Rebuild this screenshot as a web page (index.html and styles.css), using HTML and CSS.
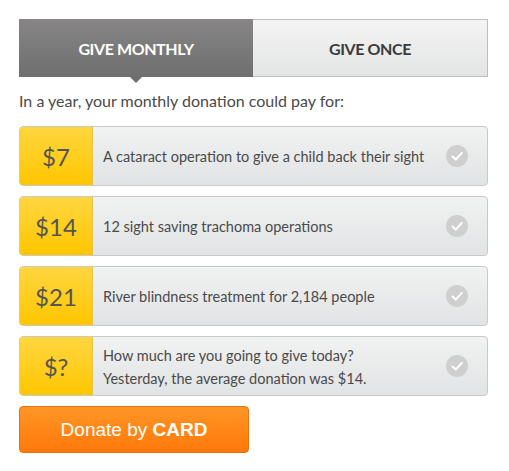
FILE: index.html
```html
<!DOCTYPE html>
<html>
<head>
<meta charset="utf-8">
<link rel="stylesheet" href="styles.css">
</head>
<body>
<div class="wrap">
  <div class="tabs">
    <div class="tab active">GIVE MONTHLY</div>
    <div class="tab">GIVE ONCE</div>
  </div>
  <p class="intro">In a year, your monthly donation could pay for:</p>
  <div class="rows">
    <div class="row">
      <div class="amt">$7</div>
      <div class="desc">A cataract operation to give a child back their sight</div>
      <div class="check"><svg width="22" height="22" viewBox="0 0 22 22"><path d="M6.5 11.5 L9.8 14.6 L15.8 7.8" fill="none" stroke="#fff" stroke-width="2" stroke-linecap="round" stroke-linejoin="round"/></svg></div>
    </div>
    <div class="row">
      <div class="amt">$14</div>
      <div class="desc">12 sight saving trachoma operations</div>
      <div class="check"><svg width="22" height="22" viewBox="0 0 22 22"><path d="M6.5 11.5 L9.8 14.6 L15.8 7.8" fill="none" stroke="#fff" stroke-width="2" stroke-linecap="round" stroke-linejoin="round"/></svg></div>
    </div>
    <div class="row">
      <div class="amt">$21</div>
      <div class="desc">River blindness treatment for 2,184 people</div>
      <div class="check"><svg width="22" height="22" viewBox="0 0 22 22"><path d="M6.5 11.5 L9.8 14.6 L15.8 7.8" fill="none" stroke="#fff" stroke-width="2" stroke-linecap="round" stroke-linejoin="round"/></svg></div>
    </div>
    <div class="row">
      <div class="amt">$?</div>
      <div class="desc two">How much are you going to give today?<br>Yesterday, the average donation was $14.</div>
      <div class="check"><svg width="22" height="22" viewBox="0 0 22 22"><path d="M6.5 11.5 L9.8 14.6 L15.8 7.8" fill="none" stroke="#fff" stroke-width="2" stroke-linecap="round" stroke-linejoin="round"/></svg></div>
    </div>
  </div>
  <button class="donate">Donate by <b>CARD</b></button>
</div>
</body>
</html>
```
FILE: styles.css
```css
html, body { margin: 0; padding: 0; background: #fff; }
body { font-family: Lato, "Open Sans", sans-serif; color: #4a4a4a; }
.wrap { width: 469px; padding: 19px 0 0 19px; }
.tabs { display: flex; height: 58px; position: relative; }
.tab {
  flex: 1; display: flex; align-items: center; justify-content: center;
  font-weight: 700; font-size: 16px; letter-spacing: -0.4px;
  box-sizing: border-box;
}
.tab.active {
  background: linear-gradient(#878585, #6f6f6f);
  color: #fff; position: relative; flex: 0 0 234px;
}
.tab.active::after {
  content: ""; position: absolute; left: 117px; top: 100%;
  margin-left: -6px;
  border-left: 6px solid transparent; border-right: 6px solid transparent;
  border-top: 6px solid #6f6f6f;
}
.tab:not(.active) {
  background: linear-gradient(#f4f4f4, #e3e4e4);
  border: 1px solid #bdbdbd; border-left: none; color: #3b3b3b;
}
.intro { margin: 0; height: 49px; line-height: 48px; font-size: 16px; color: #4a4a4a; }
.rows { display: flex; flex-direction: column; gap: 10px; }
.row {
  display: flex; align-items: center; height: 60px; box-sizing: border-box;
  border: 1px solid #c9c9c9; border-radius: 4px; overflow: hidden;
  background: linear-gradient(#f1f2f2, #e1e3e4);
}
.amt {
  flex: 0 0 72px; align-self: stretch; display: flex; align-items: center; justify-content: center;
  background: linear-gradient(#ffd640, #ffc600);
  font-size: 24px; color: #545454; border-right: 1px solid #e3c24a;
}
.desc { flex: 1; padding-left: 10px; font-size: 14.5px; color: #4a4a4a; }
.desc.two { line-height: 23px; padding-top: 1px; }
.check {
  width: 22px; height: 22px; border-radius: 50%; margin-right: 19px;
  background: #cfcfcf; display: flex;
}
.donate {
  margin-top: 10px; width: 230px; height: 47px;
  background: linear-gradient(#ff9626, #ff780a);
  border: 1px solid #e8700e; border-radius: 4px;
  color: #fff; font-family: "Liberation Sans", Arial, sans-serif; font-size: 19px;
  padding: 0; display: block;
}
.donate b { font-weight: 700; }
```
